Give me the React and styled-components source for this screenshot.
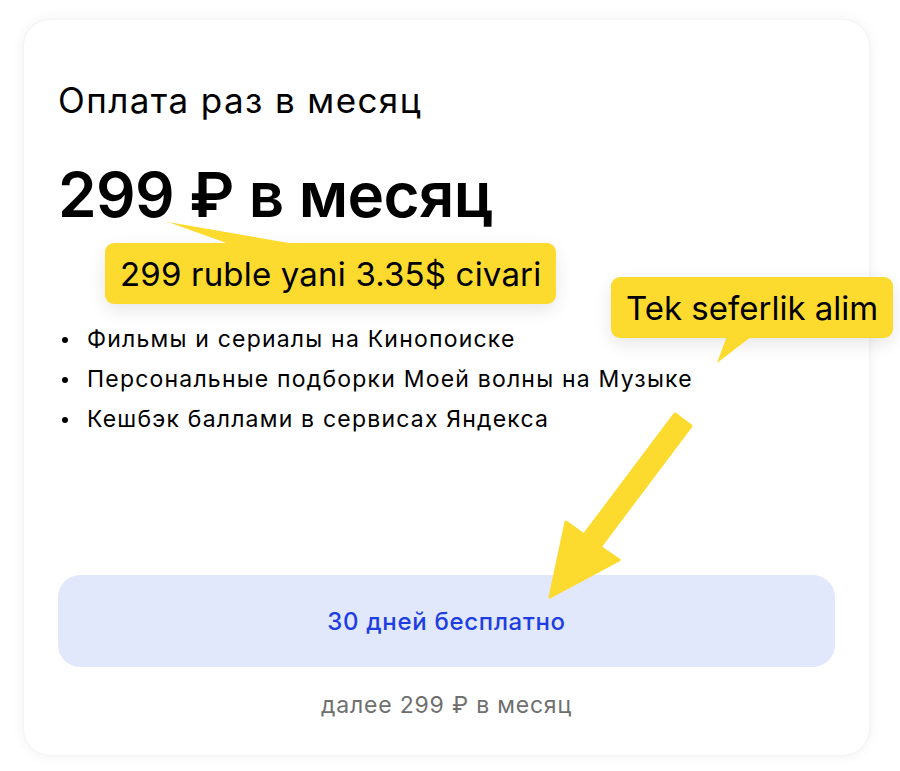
import React from 'react';
import styled, { createGlobalStyle } from 'styled-components';

const Global = createGlobalStyle`
  html, body { margin: 0; padding: 0; background: #ffffff; }
  body { font-family: Inter, "Noto Sans", sans-serif; color: #000; }
  * { box-sizing: border-box; }
`;

const YELLOW = '#FDDA2E';

const Page = styled.div`
  position: relative;
  width: 900px;
  height: 771px;
  padding: 20px 0 0 24px;
`;

const Card = styled.div`
  position: relative;
  width: 845px;
  height: 735px;
  border-radius: 26px;
  background: #fff;
  box-shadow: 0 0 14px rgba(0, 0, 0, 0.07), 0 0 2px rgba(0, 0, 0, 0.06);
  padding: 60px 34px 0;
  display: flex;
  flex-direction: column;
`;

const Title = styled.h2`
  margin: 0;
  font-size: 35px;
  line-height: 40px;
  font-weight: 400;
  letter-spacing: 1.4px;
`;

const Price = styled.div`
  margin-top: 39px;
  font-size: 62px;
  line-height: 72px;
  font-weight: 600;
  letter-spacing: -0.6px;
`;

const List = styled.ul`
  margin: 88px 0 0;
  padding: 0 0 0 29px;
  list-style: none;
`;

const Item = styled.li`
  position: relative;
  font-size: 23px;
  line-height: 40px;
  letter-spacing: 1.2px;
  &::before {
    content: '';
    position: absolute;
    left: -25px;
    top: 18px;
    width: 6px;
    height: 6px;
    border-radius: 50%;
    background: #000;
  }
`;

const Button = styled.button`
  margin-top: 136px;
  width: 100%;
  height: 92px;
  border: none;
  border-radius: 22px;
  background: #E1E8FC;
  color: #1E3DE2;
  font-family: inherit;
  font-size: 24px;
  font-weight: 500;
  letter-spacing: 0.7px;
`;

const Note = styled.div`
  margin-top: 24px;
  text-align: center;
  font-size: 23px;
  line-height: 28px;
  letter-spacing: 0.8px;
  color: #6F6F6F;
`;

const Callout = styled.div`
  position: absolute;
  left: ${(p) => p.$x}px;
  top: ${(p) => p.$y}px;
  height: 61px;
  padding: 0 15px;
  display: flex;
  align-items: center;
  background: ${YELLOW};
  border-radius: 9px;
  box-shadow: 0 6px 18px rgba(0, 0, 0, 0.1);
  font-size: 33px;
  font-weight: 400;
  white-space: nowrap;
  letter-spacing: ${(p) => p.$ls}px;
`;

const Tail = styled.svg`
  position: absolute;
  overflow: visible;
  left: 0;
  top: 0;
`;

const Overlay = styled.svg`
  position: absolute;
  left: 0;
  top: 0;
  pointer-events: none;
`;

export default function App() {
  return (
    <Page>
      <Global />
      <Card>
        <Title>Оплата раз в месяц</Title>
        <Price>299 ₽ в месяц</Price>
        <List>
          <Item>Фильмы и сериалы на Кинопоиске</Item>
          <Item>Персональные подборки Моей волны на Музыке</Item>
          <Item>Кешбэк баллами в сервисах Яндекса</Item>
        </List>
        <Button>30 дней бесплатно</Button>
        <Note>далее 299 ₽ в месяц</Note>

        <Callout $x={81} $y={223} $ls={0.18}>
          <Tail width="1" height="1">
            <polygon points="63,-21 127,2 195,2" fill={YELLOW} />
          </Tail>
          299 ruble yani 3.35$ civari
        </Callout>
        <Callout $x={587} $y={257} $ls={0}>
          <Tail width="1" height="1">
            <polygon points="116,59 141,59 106,86" fill={YELLOW} />
          </Tail>
          Tek seferlik alim
        </Callout>
      </Card>
      <Overlay width="900" height="771">
        <polygon
          points="675,414 691,426 600,547 619,560 550,597 566,522 584,535"
          fill={YELLOW}
          stroke={YELLOW}
          strokeWidth="3"
          strokeLinejoin="round"
        />
      </Overlay>
    </Page>
  );
}
